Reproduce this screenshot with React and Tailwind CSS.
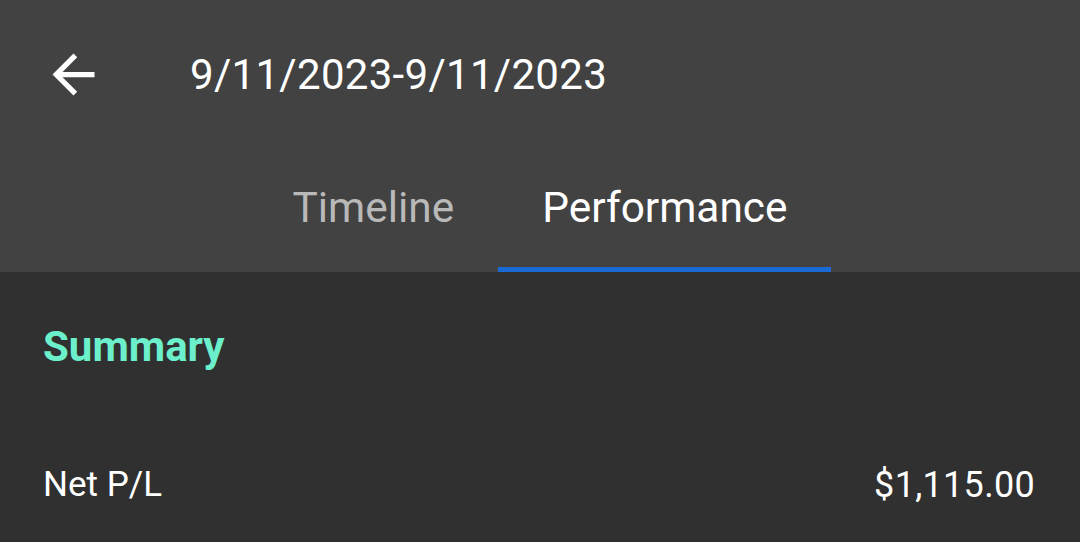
import React from 'react';

const ArrowBack = () => (
  <svg className="w-[63px] h-[63px] text-white" viewBox="0 0 24 24" fill="currentColor">
    <path d="M20 11H7.83l5.59-5.59L12 4l-8 8 8 8 1.41-1.41L7.83 13H20v-2z" />
  </svg>
);

const TABS = ['Timeline', 'Performance'];

export default function App() {
  const active = 'Performance';

  return (
    <div className="w-[1080px] h-[542px] bg-[#303030] overflow-hidden font-['Roboto',sans-serif]">
      {/* App bar + tabs */}
      <div className="bg-[#424242] h-[272px] flex flex-col">
        <div className="h-[148px] flex items-center">
          <div className="ml-[42px] flex items-center justify-center">
            <ArrowBack />
          </div>
          <div className="ml-[85px] text-white text-[42px] tracking-[0.3px]">9/11/2023-9/11/2023</div>
        </div>

        <div className="flex-1 flex justify-center">
          {TABS.map(t => (
            <div key={t} className="flex flex-col px-[44px]">
              <div
                className={`flex-1 flex items-center justify-center text-[42.4px] ${
                  t === active ? 'text-white' : 'text-[#b9b9b9]'
                }`}
              >
                {t}
              </div>
              <div className={`h-[5px] ${t === active ? 'bg-[#1a6ad6] -mx-[44px]' : ''}`} />
            </div>
          ))}
        </div>
      </div>

      {/* Summary */}
      <div className="px-[43px]">
        <div className="h-[148px] flex items-center">
          <h2 className="text-[#6cf0cc] text-[42px] font-bold">Summary</h2>
        </div>
        <div className="mt-[38px] flex items-center justify-between text-white pr-[2px]">
          <span className="text-[35px]">Net P/L</span>
          <span className="text-[36px] tracking-[0.3px]">$1,115.00</span>
        </div>
      </div>
    </div>
  );
}
